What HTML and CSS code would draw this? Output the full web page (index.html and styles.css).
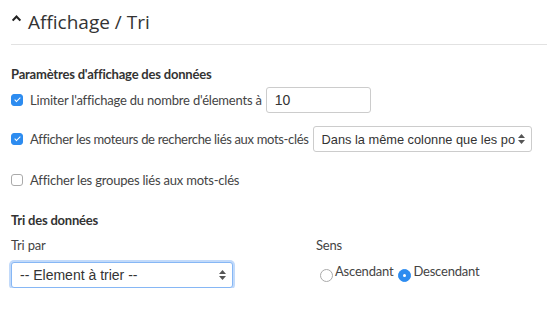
FILE: index.html
```html
<!DOCTYPE html>
<html lang="fr">
<head>
  <meta charset="UTF-8">
  <title>Affichage / Tri</title>
  <link rel="stylesheet" href="styles.css">
</head>
<body>
<div class="panel">
  <h2 class="panel-title">
    <svg class="caret" width="9" height="7" viewBox="0 0 9 7"><path d="M0.6 5.6 L4.5 1.6 L8.4 5.6" fill="none" stroke="#222" stroke-width="2.2"/></svg>
    Affichage / Tri
  </h2>

  <!-- Paramètres d'affichage -->
  <h3 class="section-title">Paramètres d'affichage des données</h3>
  <div class="row row-limit">
    <label class="check"><input type="checkbox" checked> Limiter l'affichage du nombre d'élements à</label>
    <input type="text" class="field field-num" value="10">
  </div>
  <div class="row row-engines">
    <label class="check"><input type="checkbox" checked> Afficher les moteurs de recherche liés aux mots-clés</label>
    <select class="field field-select field-wide">
      <option>Dans la même colonne que les po</option>
    </select>
  </div>
  <div class="row row-groups">
    <label class="check"><input type="checkbox"> Afficher les groupes liés aux mots-clés</label>
  </div>

  <!-- Tri -->
  <h3 class="section-title sort-title">Tri des données</h3>
  <div class="sort-grid">
    <div class="sort-col">
      <div class="small-label">Tri par</div>
      <select class="field field-select field-sort">
        <option>-- Element à trier --</option>
      </select>
    </div>
    <div class="sort-col">
      <div class="small-label">Sens</div>
      <div class="radios">
        <label class="radio"><input type="radio" name="sens">Ascendant</label>
        <label class="radio"><input type="radio" name="sens" checked>Descendant</label>
      </div>
    </div>
  </div>
</div>
</body>
</html>
```

FILE: styles.css
```css
*, *::before, *::after { box-sizing: border-box; }
body { margin: 0; background: #fff; color: #333; font-family: Lato, "Open Sans", sans-serif; letter-spacing: -0.2px; }
.panel { padding: 0 0 0 11px; }
.panel-title { margin: 0; padding: 9px 0 9px 1px; font-family: "Open Sans", sans-serif; font-weight: 400; font-size: 19px; letter-spacing: 0; color: #333; border-bottom: 1px solid #e2e2e2; display: flex; align-items: center; gap: 7px; }
.caret { margin-top: -8px; }
.section-title { margin: 21px 0 0; font-size: 13px; font-weight: 700; color: #333; }
.row { display: flex; align-items: center; gap: 4px; font-size: 13px; }
.row-limit { margin-top: 5px; }
.row-engines { margin-top: 13px; }
.row-engines .check { letter-spacing: -0.33px; }
.row-groups { margin-top: 20px; }
.check { display: flex; align-items: center; gap: 7px; color: #444; }
.check input { appearance: none; margin: 0; width: 12px; height: 12px; border: 1px solid #aaa; border-radius: 3px; background: #fff; position: relative; }
.check input:checked { background: #2d8cf0; border-color: #2d8cf0; }
.check input:checked::after { content: ""; position: absolute; left: 3.5px; top: 1px; width: 3px; height: 6px; border: solid #fff; border-width: 0 1.6px 1.6px 0; transform: rotate(45deg); }
.field { font-family: "Liberation Sans", Arial, sans-serif; font-size: 14px; letter-spacing: 0; color: #333; border: 1px solid #ccc; border-radius: 3px; background: #fff; height: 26px; }
.field-num { width: 105px; padding: 0 8px; }
.field-select { appearance: none; padding: 0 18px 0 8px; background-image: url("data:image/svg+xml,%3Csvg xmlns='http://www.w3.org/2000/svg' width='7' height='10'%3E%3Cpath d='M0 4 L3.5 0 L7 4Z M0 6 L3.5 10 L7 6Z' fill='%23555'/%3E%3C/svg%3E"); background-repeat: no-repeat; background-position: right 6px center; }
.field-wide { width: 219px; font-size: 12.8px; padding-right: 12px; }
.sort-title { margin-top: 24px; }
.sort-grid { display: grid; grid-template-columns: 305px 1fr; margin-top: 9px; }
.small-label { font-size: 13px; color: #444; }
.field-sort { width: 222px; margin-top: 9px; border-color: #86b7f5; box-shadow: 0 0 0 2px rgba(80, 150, 240, 0.35); }
.radios { display: flex; gap: 5px; margin-top: 10px; margin-left: 4px; font-size: 13px; }
.radio { display: flex; align-items: flex-end; color: #444; }
.radio input { appearance: none; margin: 0 2px 0 0; width: 13px; height: 13px; border: 1px solid #aaa; border-radius: 50%; background: #fff; position: relative; top: 3px; }
.radio input:checked { background: #2d8cf0; border-color: #2d8cf0; }
.radio input:checked::after { content: ""; position: absolute; left: 4px; top: 4px; width: 3px; height: 3px; border-radius: 50%; background: #fff; }
```
